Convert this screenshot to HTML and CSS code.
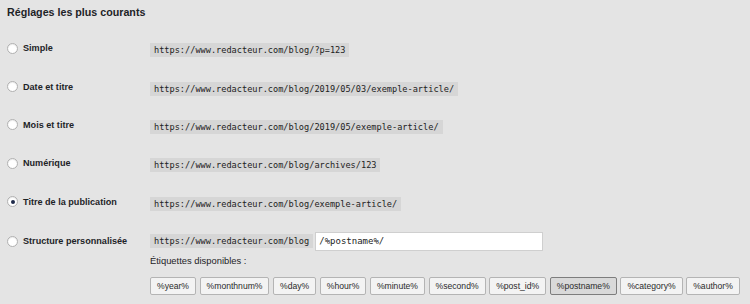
FILE: index.html
```html
<!DOCTYPE html>
<html lang="fr">
<head>
    <meta charset="UTF-8">
    <meta name="viewport" content="width=device-width, initial-scale=1.0">
    <title>Réglages des permaliens</title>
    <link rel="stylesheet" href="styles.css">
</head>
<body>

<h2 class="title">Réglages les plus courants</h2>

<div class="settings">
    <div class="row">
        <label class="choice"><input type="radio" name="structure"> Simple</label>
        <div class="value"><code>https://www.redacteur.com/blog/?p=123</code></div>
    </div>
    <div class="row">
        <label class="choice"><input type="radio" name="structure"> Date et titre</label>
        <div class="value"><code>https://www.redacteur.com/blog/2019/05/03/exemple-article/</code></div>
    </div>
    <div class="row">
        <label class="choice"><input type="radio" name="structure"> Mois et titre</label>
        <div class="value"><code>https://www.redacteur.com/blog/2019/05/exemple-article/</code></div>
    </div>
    <div class="row">
        <label class="choice"><input type="radio" name="structure"> Numérique</label>
        <div class="value"><code>https://www.redacteur.com/blog/archives/123</code></div>
    </div>
    <div class="row">
        <label class="choice"><input type="radio" name="structure" checked> Titre de la publication</label>
        <div class="value"><code>https://www.redacteur.com/blog/exemple-article/</code></div>
    </div>
    <div class="row custom">
        <label class="choice"><input type="radio" name="structure"> Structure personnalisée</label>
        <div class="value">
            <div class="custom-line">
                <code>https://www.redacteur.com/blog</code>
                <input type="text" class="custom-input" value="/%postname%/">
            </div>
            <p class="tags-label">Étiquettes disponibles :</p>
            <div class="tags">
                <button>%year%</button>
                <button>%monthnum%</button>
                <button>%day%</button>
                <button>%hour%</button>
                <button>%minute%</button>
                <button>%second%</button>
                <button>%post_id%</button>
                <button class="active">%postname%</button>
                <button>%category%</button>
                <button>%author%</button>
            </div>
        </div>
    </div>
</div>

</body>
</html>
```

FILE: styles.css
```css
body {
    font-family: "Liberation Sans", Arial, sans-serif;
    margin: 0;
    padding: 0 7px;
    background-color: #e4e4e4;
    color: #1d2327;
}
.title {
    font-size: 10.7px;
    font-weight: bold;
    line-height: 14px;
    margin: 0;
    padding-top: 5px;
    height: 29px;
    box-sizing: border-box;
}
.row {
    display: flex;
    align-items: center;
    height: 38.4px;
}
.row.custom {
    align-items: flex-start;
    height: auto;
    padding-top: 11px;
}
.choice {
    flex-shrink: 0;
    width: 143px;
    height: 19px;
    display: flex;
    align-items: center;
    gap: 5px;
    font-size: 9.1px;
    font-weight: bold;
}
.choice input {
    appearance: none;
    width: 11px;
    height: 11px;
    margin: 0;
    border: 1px solid #b0b0b0;
    border-radius: 50%;
    background-color: #fff;
    box-shadow: inset 0 1px 1px rgba(0, 0, 0, 0.08);
    display: grid;
    place-content: center;
}
.choice input:checked::before {
    content: "";
    width: 4px;
    height: 4px;
    border-radius: 50%;
    background-color: #1e2a4a;
}
code {
    font-family: "DejaVu Sans Mono", "Liberation Mono", monospace;
    font-size: 8.6px;
    line-height: 14px;
    display: inline-block;
    padding: 0 4px;
    background-color: #d6d6d6;
    color: #222;
}
.custom-line {
    display: flex;
    align-items: center;
    gap: 2px;
}
.custom-input {
    width: 228px;
    height: 19px;
    box-sizing: border-box;
    border: 1px solid #cfcfcf;
    background-color: #fff;
    font-family: "DejaVu Sans Mono", "Liberation Mono", monospace;
    font-size: 9px;
    color: #222;
    padding: 0 3px;
    margin: 0;
}
.tags-label {
    font-size: 9.4px;
    line-height: 12px;
    margin: 4px 0 0;
}
.tags {
    display: flex;
    gap: 3.6px;
    margin-top: 10px;
}
.tags button {
    font-family: "Liberation Sans", Arial, sans-serif;
    font-size: 8.6px;
    height: 18px;
    padding: 0 6px;
    margin: 0;
    border: 1px solid #b4b4b4;
    border-radius: 2px;
    background-color: #f3f3f3;
    color: #2a2a2a;
}
.tags button.active {
    background-color: #d9d9d9;
    border-color: #7d7d7d;
}
```
